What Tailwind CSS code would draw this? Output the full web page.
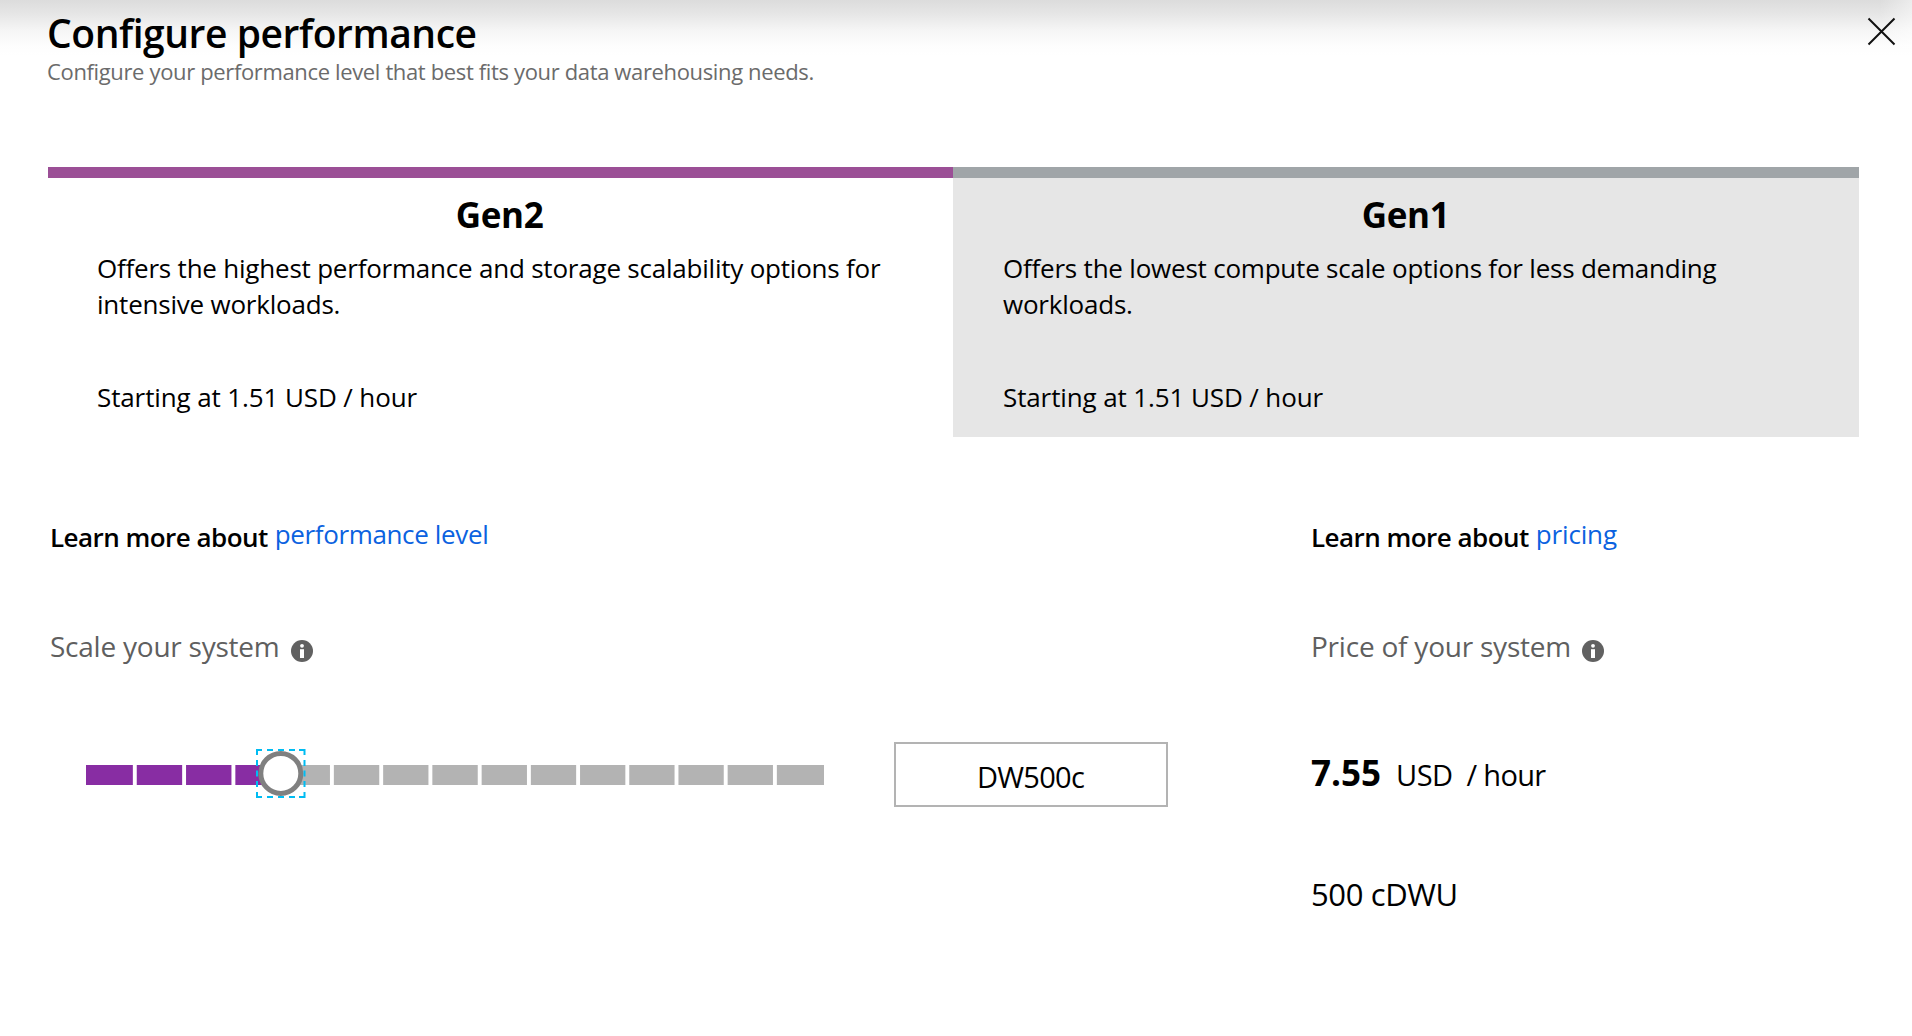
<!DOCTYPE html>
<html lang="en">
<head>
<meta charset="utf-8">
<title>Configure performance</title>
<script src="https://cdn.jsdelivr.net/npm/@tailwindcss/browser@4"></script>
</head>
<body class="h-[1036px] w-[1912px] overflow-hidden bg-white font-['Open_Sans','Noto_Sans',sans-serif] text-black">
<header class="flex h-[167px] items-start justify-between bg-[linear-gradient(to_right,transparent_1880px,rgba(255,255,255,0.45)_1912px),linear-gradient(to_bottom,#dcdcdc_0px,#e6e6e6_14px,#f5f5f5_30px,#fdfdfd_45px,#ffffff_56px)] pt-2 pr-[16px] pl-[47px]">
  <div>
    <h1 class="text-[39px] leading-[50px] font-semibold tracking-[-0.44px] whitespace-nowrap">Configure performance</h1>
    <p class="text-[22px] leading-[27px] tracking-[-0.356px] whitespace-nowrap text-[#6b6b6b]">Configure your performance level that best fits your data warehousing needs.</p>
  </div>
  <button aria-label="Close" class="mt-[9px]">
    <svg class="block" width="29" height="29" viewBox="0 0 29 29" fill="none" stroke="#111" stroke-width="2"><path d="M1.5 1.5 27.5 27.5M27.5 1.5 1.5 27.5"/></svg>
  </button>
</header>

<main>
  <section class="mr-[53px] ml-12 grid h-[270px] grid-cols-[905px_906px]">
    <article class="border-t-[11px] border-[#9b4f96] pt-[13px] pl-[49px]">
      <h2 class="pr-[51px] text-center text-[35px] leading-[48px] font-bold tracking-[-0.342px]">Gen2</h2>
      <p class="mt-[11px] text-[26px] leading-9 tracking-[-0.215px]">Offers the highest performance and storage scalability options for<br>intensive workloads.</p>
      <p class="mt-[57px] text-[26px] leading-9 tracking-[-0.117px]">Starting at 1.51 USD / hour</p>
    </article>
    <article class="border-t-[11px] border-[#a0a5a8] bg-[#e6e6e6] pt-[13px] pl-[50px]">
      <h2 class="pr-[51px] text-center text-[35px] leading-[48px] font-bold tracking-[-0.342px]">Gen1</h2>
      <p class="mt-[11px] text-[26px] leading-9 tracking-[-0.215px]">Offers the lowest compute scale options for less demanding<br>workloads.</p>
      <p class="mt-[57px] text-[26px] leading-9 tracking-[-0.117px]">Starting at 1.51 USD / hour</p>
    </article>
  </section>

  <section class="grid grid-cols-[1261px_1fr] pt-[79px] pl-[50px]">
    <div>
      <div class="flex h-[111px] items-start gap-[7px] text-[26px] leading-9">
        <span class="pt-[3px] font-semibold tracking-[-0.532px]">Learn more about</span>
        <a class="tracking-[-0.36px] text-[#0b62e0]">performance level</a>
      </div>
      <div class="flex h-[115px] items-start gap-[11px] text-[28px] leading-[38px] tracking-[-0.235px] text-[#5f5f5f]">
        <span>Scale your system</span>
        <svg class="mt-[13px]" width="22" height="22" viewBox="0 0 22 22"><circle cx="11" cy="11" r="11" fill="#616161"/><circle cx="11" cy="5.8" r="1.9" fill="#fff"/><path d="M9 9.2h4v8.8H9z" fill="#fff"/></svg>
      </div>
      <div class="flex h-[65px] items-center">
        <div class="relative ml-9 w-[738px]">
          <svg class="block" width="738" height="20" viewBox="0 0 738 20">
            <path fill="#b3b3b3" d="M0 0h738v20H0z"/>
            <path fill="#882da3" d="M0 0h196v20H0z"/>
            <path stroke="#fff" stroke-width="3.9" d="M48.800 0v20M98.100 0v20M147.400 0v20M196.600 0v20M245.900 0v20M295.200 0v20M344.400 0v20M393.700 0v20M442.900 0v20M492.100 0v20M541.300 0v20M590.500 0v20M639.700 0v20M688.900 0v20"/>
          </svg>
          <svg class="absolute -top-4 left-[170px]" width="50" height="49" viewBox="0 0 50 49" fill="none">
            <circle cx="24.8" cy="24.4" r="20" fill="#fff" stroke="#808080" stroke-width="5"/>
            <path stroke="#00bcf2" stroke-width="2" d="M0 1h6M11 1h6M22 1h6M33 1h6M43 1h6M0 48h6M11 48h6M22 48h6M33 48h6M43 48h6M1 0v6M1 11v6M1 21.500v6M1 32v6M1 43v6M48.500 0v6M48.500 11v6M48.500 21.500v6M48.500 32v6M48.500 43v6"/>
          </svg>
        </div>
        <div class="ml-[70px] flex h-[65px] w-[274px] items-center justify-center border-2 border-[#b3b3b3] pt-[5px] pr-px text-[29px] leading-10 tracking-[-0.713px]">DW500c</div>
      </div>
    </div>

    <div>
      <div class="flex h-[111px] items-start gap-[7px] text-[26px] leading-9">
        <span class="pt-[3px] font-semibold tracking-[-0.532px]">Learn more about</span>
        <a class="tracking-[-0.15px] text-[#0b62e0]">pricing</a>
      </div>
      <div class="flex h-[115px] items-start gap-[11px] text-[28px] leading-[38px] tracking-[-0.22px] text-[#5f5f5f]">
        <span>Price of your system</span>
        <svg class="mt-[13px]" width="22" height="22" viewBox="0 0 22 22"><circle cx="11" cy="11" r="11" fill="#616161"/><circle cx="11" cy="5.8" r="1.9" fill="#fff"/><path d="M9 9.2h4v8.8H9z" fill="#fff"/></svg>
      </div>
      <div class="flex h-[131px] items-baseline pt-[10px] text-[29px] leading-10">
        <span class="text-[35px] leading-[42px] font-bold">7.55</span>
        <span class="ml-[15px] tracking-[-0.521px]">USD</span>
        <span class="ml-[14px] tracking-[-0.7px]">/ hour</span>
      </div>
      <div class="text-[31px] leading-[42px] tracking-[-0.385px]">500 cDWU</div>
    </div>
  </section>
</main>
</body>
</html>
